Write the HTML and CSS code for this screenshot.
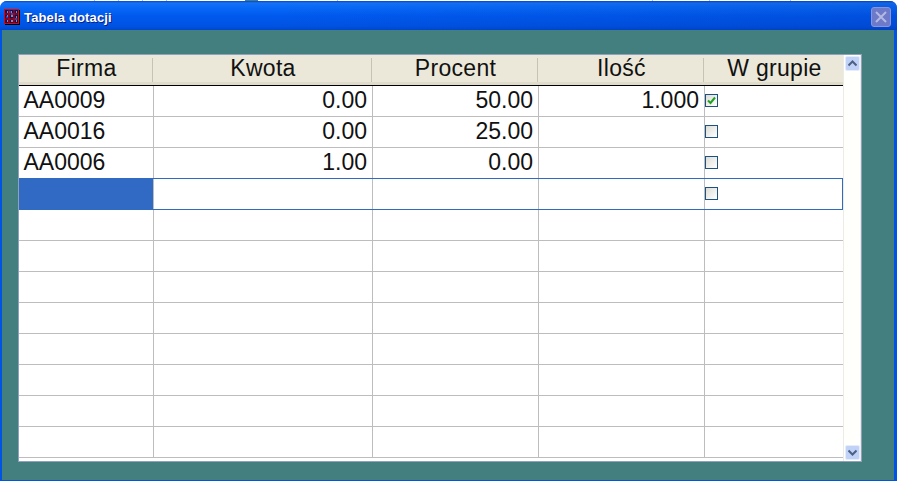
FILE: index.html
```html
<!DOCTYPE html>
<html lang="en">
<head>
    <meta charset="UTF-8">
    <title>Tabela dotacji</title>
    <link rel="stylesheet" href="styles.css">
</head>
<body>
    <div class="window">
        <div class="titlebar">
            <svg class="app-icon" width="16" height="16" viewBox="0 0 16 16">
                <rect x="1" y="1" width="15" height="15" fill="#000"/>
                <rect x="0.5" y="0.5" width="14" height="14" fill="#10105a" stroke="#e80000"/>
                <path d="M1 5h13M1 10h13M5 1v13M10 1v13" stroke="#d00000"/>
                <path d="M3 3h1M7 3h1M12 3h1M3 7h1M7 7h2M12 8h1M3 12h1M7 12h2M12 12h1" stroke="#fff"/>
                <path d="M2 8h2M7 5h2M11 10h2M6 2v2" stroke="#2f6cff"/>
            </svg>
            <span class="title">Tabela dotacji</span>
            <div class="close-btn">
                <svg width="14" height="14" viewBox="0 0 14 14">
                    <path d="M2 2l10 10M12 2l-10 10" stroke="#b4b9e2" stroke-width="2"/>
                </svg>
            </div>
        </div>
        <div class="client">
            <div class="panel">
                <div class="table">
                    <div class="row head">
                        <div class="cell">Firma</div>
                        <div class="cell">Kwota</div>
                        <div class="cell">Procent</div>
                        <div class="cell">Ilość</div>
                        <div class="cell">W grupie</div>
                    </div>
                    <div class="row">
                        <div class="cell code">AA0009</div>
                        <div class="cell num">0.00</div>
                        <div class="cell num">50.00</div>
                        <div class="cell num">1.000</div>
                        <div class="cell"><span class="check">
                            <svg width="9" height="9" viewBox="0 0 9 9"><path d="M1 4.500l2.500 2.500 4.500-5.500" fill="none" stroke="#21a121" stroke-width="2"/></svg>
                        </span></div>
                    </div>
                    <div class="row">
                        <div class="cell code">AA0016</div>
                        <div class="cell num">0.00</div>
                        <div class="cell num">25.00</div>
                        <div class="cell num"></div>
                        <div class="cell"><span class="check"></span></div>
                    </div>
                    <div class="row">
                        <div class="cell code">AA0006</div>
                        <div class="cell num">1.00</div>
                        <div class="cell num">0.00</div>
                        <div class="cell num"></div>
                        <div class="cell"><span class="check"></span></div>
                    </div>
                    <div class="row current">
                        <div class="cell"></div>
                        <div class="cell num"></div>
                        <div class="cell num"></div>
                        <div class="cell num"></div>
                        <div class="cell"><span class="check"></span></div>
                    </div>
                    <div class="row"><div class="cell"></div><div class="cell"></div><div class="cell"></div><div class="cell"></div><div class="cell"></div></div>
                    <div class="row"><div class="cell"></div><div class="cell"></div><div class="cell"></div><div class="cell"></div><div class="cell"></div></div>
                    <div class="row"><div class="cell"></div><div class="cell"></div><div class="cell"></div><div class="cell"></div><div class="cell"></div></div>
                    <div class="row"><div class="cell"></div><div class="cell"></div><div class="cell"></div><div class="cell"></div><div class="cell"></div></div>
                    <div class="row"><div class="cell"></div><div class="cell"></div><div class="cell"></div><div class="cell"></div><div class="cell"></div></div>
                    <div class="row"><div class="cell"></div><div class="cell"></div><div class="cell"></div><div class="cell"></div><div class="cell"></div></div>
                    <div class="row"><div class="cell"></div><div class="cell"></div><div class="cell"></div><div class="cell"></div><div class="cell"></div></div>
                    <div class="row"><div class="cell"></div><div class="cell"></div><div class="cell"></div><div class="cell"></div><div class="cell"></div></div>
                </div>
                <div class="scrollbar">
                    <div class="scroll-btn">
                        <svg width="9" height="7" viewBox="0 0 9 7"><path d="M0.500 5.500l4-4 4 4" fill="none" stroke="#4d6185" stroke-width="2"/></svg>
                    </div>
                    <div class="scroll-btn">
                        <svg width="9" height="7" viewBox="0 0 9 7"><path d="M0.500 1.500l4 4 4-4" fill="none" stroke="#4d6185" stroke-width="2"/></svg>
                    </div>
                </div>
            </div>
        </div>
    </div>
</body>
</html>
```

FILE: styles.css
```css
* {
    box-sizing: border-box;
}

html, body {
    margin: 0;
    height: 100%;
    overflow: hidden;
}

/* the 1px of the window behind shows above the title bar */
body {
    padding-top: 1px;
    font-family: "Liberation Sans", Arial, sans-serif;
    background-color: #fff;
    background-repeat: no-repeat;
    background-image:
        linear-gradient(#bbb, #bbb), linear-gradient(#bbb, #bbb), linear-gradient(#bbb, #bbb),
        linear-gradient(#bbb, #bbb), linear-gradient(#bbb, #bbb), linear-gradient(#bbb, #bbb),
        linear-gradient(#bbb, #bbb), linear-gradient(#bbb, #bbb), linear-gradient(#437f7f, #437f7f);
    background-size: 1px 1px, 1px 1px, 1px 1px, 1px 1px, 1px 1px, 1px 1px, 1px 1px, 1px 1px, 13px 1px;
    background-position: 94px 0, 118px 0, 142px 0, 166px 0, 337px 0, 652px 0, 709px 0, 790px 0, 245px 0;
}

.window {
    width: 897px;
    height: 480px;
    display: flex;
    flex-direction: column;
    background: #0054e3;
    border-radius: 7px 7px 0 0;
    overflow: hidden;
}

.titlebar {
    height: 29px;
    flex: none;
    display: flex;
    align-items: center;
    padding: 3px 6px 0 4px;
    background:
        linear-gradient(90deg, rgba(0, 30, 140, 0) 30%, rgba(0, 30, 140, 0.16) 100%),
        linear-gradient(#0048d0 0, #1a72f2 2px, #0a6cf8 5px, #0059ee 15px, #0053e2 25px, #0048cc 29px);
}

.app-icon {
    flex: none;
    margin-right: 4px;
}

.title {
    color: #fff;
    font-size: 13px;
    font-weight: bold;
    letter-spacing: 0.15px;
    margin-top: 1px;
    text-shadow: 1px 1px 0 #0f1f80;
}

.close-btn {
    width: 20px;
    height: 20px;
    margin-left: auto;
    margin-top: -1px;
    display: flex;
    align-items: center;
    justify-content: center;
    background: #6d79c9;
    border: 1px solid #8a94d6;
    border-radius: 3px;
}

.client {
    flex: 1;
    margin: 0 3px 1px 2px;
    padding: 24px 0 0 16px;
    background: #437f7f;
}

.panel {
    width: 844px;
    height: 408px;
    display: flex;
    border: 1px solid #8fa2bd;
    background: #fffffb;
}

.table {
    width: 824px;
    flex: none;
    overflow: hidden;
    background: #fff;
}

.row {
    height: 31px;
    display: grid;
    grid-template-columns: 135px 219px 166px 166px 138px;
    border-bottom: 1px solid #bdbdbd;
}

.cell {
    font-size: 23px;
    line-height: 28px;
    padding: 0 5px;
    color: #111;
    border-right: 1px solid #bdbdbd;
    white-space: nowrap;
}

.cell:last-child {
    border-right: none;
}

.code {
    padding-left: 4.5px;
}

.num {
    text-align: right;
}

.head {
    grid-template-columns: 134px 219px 166px 166px 139px;
    background: #ebe8d9;
    border-bottom: 1px solid #000;
    box-shadow: inset 0 -3px 0 #dfdccb;
}

.head .cell {
    height: 24px;
    margin-top: 3px;
    padding: 0 0 0 2px;
    line-height: 21px;
    letter-spacing: 0.3px;
    text-align: center;
    border-right-color: #c6c3b2;
}

.current {
    grid-template-columns: 134px 219px 166px 166px 137px;
    border: 1px solid #2f6bbf;
    margin-top: -1px;
    height: 32px;
}

.current .cell:first-child {
    background: #316ac5;
}

.check {
    display: flex;
    align-items: center;
    justify-content: center;
    width: 13px;
    height: 13px;
    margin: 8px 0 0 -5px;
    border: 1px solid #1c5180;
    background: linear-gradient(135deg, #dcdcd7, #fff);
}

.scrollbar {
    flex: 1;
    display: flex;
    flex-direction: column;
    justify-content: space-between;
    align-items: center;
    padding: 1px 0 1px 1px;
    border-left: 1px solid #ecebe5;
    border-right: 1px solid #ecebe5;
}

.scroll-btn {
    width: 15px;
    height: 15px;
    display: flex;
    align-items: center;
    justify-content: center;
    background: #c1d2f8;
    border: 1px solid #e6ecfc;
    border-radius: 2px;
}
```
